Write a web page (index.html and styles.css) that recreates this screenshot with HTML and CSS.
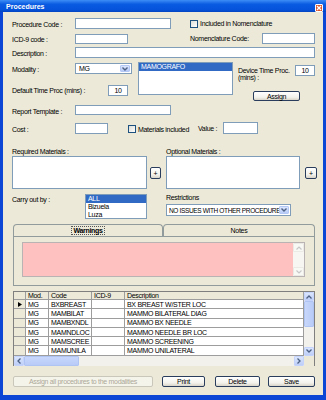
FILE: index.html
```html
<!DOCTYPE html>
<html lang="en">
<head>
    <meta charset="UTF-8">
    <title>Procedures</title>
    <link rel="stylesheet" href="styles.css">
</head>
<body>

<div class="window">
    <div class="titlebar">
        <span class="title">Procedures</span>
        <span class="close">
            <svg width="6" height="6" viewBox="0 0 6 6"><path d="M1 1L5 5M5 1L1 5" stroke="#fff" stroke-width="1.3"/></svg>
        </span>
    </div>

    <div class="content">
        <!-- code / nomenclature -->
        <div class="row row-code">
            <span class="lbl">Procedure Code :</span>
            <span class="field f-code"></span>
            <span class="check-wrap"><span class="check"></span>Included in Nomenclature</span>
        </div>

        <div class="row row-icd">
            <span class="lbl">ICD-9 code :</span>
            <span class="field f-icd"></span>
            <span class="lbl-nomen">Nomenclature Code:</span>
            <span class="field f-nomen"></span>
        </div>

        <div class="row row-desc">
            <span class="lbl">Description :</span>
            <span class="field f-desc"></span>
        </div>

        <!-- modality block -->
        <div class="modality-block">
            <div class="mod-left">
                <div class="row row-mod">
                    <span class="lbl">Modality :</span>
                    <span class="combo combo-mod">
                        <span class="combo-text">MG</span>
                        <span class="combo-btn"><svg width="6" height="4" viewBox="0 0 6 4"><path d="M0.5 0.5L3 3L5.5 0.5" fill="none" stroke="#4d6185" stroke-width="1.4"/></svg></span>
                    </span>
                </div>
                <div class="row row-default">
                    <span class="lbl lbl-default">Default Time Proc (mins) :</span>
                    <span class="field num">10</span>
                </div>
            </div>
            <div class="listbox list-mod">
                <div class="item selected">MAMOGRAFO</div>
            </div>
            <div class="mod-right">
                <div class="row-device">
                    <span class="lbl-device">Device Time Proc.<br>(mins) :</span>
                    <span class="field num">10</span>
                </div>
                <button class="btn btn-assign">Assign</button>
            </div>
        </div>

        <div class="row row-report">
            <span class="lbl">Report Template :</span>
            <span class="field f-report"></span>
        </div>

        <div class="row row-cost">
            <span class="lbl">Cost :</span>
            <span class="field f-cost"></span>
            <span class="check-wrap check-mat"><span class="check"></span>Materials included</span>
            <span class="lbl-value">Value :</span>
            <span class="field f-value"></span>
        </div>

        <!-- materials -->
        <div class="two-col materials">
            <div>
                <div class="mat-label">Required Materials :</div>
                <div class="mat-body">
                    <div class="listbox list-req"></div>
                    <button class="btn btn-plus">+</button>
                </div>
            </div>
            <div>
                <div class="mat-label">Optional Materials :</div>
                <div class="mat-body">
                    <div class="listbox list-opt"></div>
                    <button class="btn btn-plus btn-plus-opt">+</button>
                </div>
            </div>
        </div>

        <div class="two-col carry">
            <div class="carry-left">
                <span class="lbl lbl-carry">Carry out by :</span>
                <div class="listbox list-carry">
                    <div class="item selected">ALL</div>
                    <div class="item">Bizuela</div>
                    <div class="item">Luza</div>
                </div>
            </div>
            <div>
                <div class="lbl-restr">Restrictions</div>
                <span class="combo combo-restr">
                    <span class="combo-text">NO ISSUES WITH OTHER PROCEDURE</span>
                    <span class="combo-btn"><svg width="6" height="4" viewBox="0 0 6 4"><path d="M0.5 0.5L3 3L5.5 0.5" fill="none" stroke="#4d6185" stroke-width="1.4"/></svg></span>
                </span>
            </div>
        </div>

        <!-- tabs -->
        <div class="tabs">
            <div class="tab-strip">
                <div class="tab tab-warn"><span class="focus">Warnings</span></div>
                <div class="tab tab-notes">Notes</div>
            </div>
            <div class="tab-panel">
                <div class="memo">
                    <div class="memo-scroll">
                        <span class="arrow-box pale"><svg width="6" height="4" viewBox="0 0 6 4"><path d="M0.5 3.5L3 1L5.5 3.5" fill="none" stroke="#c8c8c8" stroke-width="1.2"/></svg></span>
                        <span class="arrow-box pale"><svg width="6" height="4" viewBox="0 0 6 4"><path d="M0.5 0.5L3 3L5.5 0.5" fill="none" stroke="#c8c8c8" stroke-width="1.2"/></svg></span>
                    </div>
                </div>
            </div>
        </div>

        <!-- procedures grid -->
        <div class="grid">
            <div class="grid-main">
                <div class="grid-table">
                    <div class="hcell"></div><div class="hcell">Mod.</div><div class="hcell">Code</div><div class="hcell">ICD-9</div><div class="hcell">Description</div>

                    <div class="rhead"><svg width="4" height="5" viewBox="0 0 4 5"><path d="M0 0L4 2.5L0 5Z" fill="#000"/></svg></div><div class="cell">MG</div><div class="cell">BXBREAST</div><div class="cell"></div><div class="cell">BX BREAST W/STER LOC</div>
                    <div class="rhead"></div><div class="cell">MG</div><div class="cell">MAMBILAT</div><div class="cell"></div><div class="cell">MAMMO BILATERAL DIAG</div>
                    <div class="rhead"></div><div class="cell">MG</div><div class="cell">MAMBXNDL</div><div class="cell"></div><div class="cell">MAMMO BX NEEDLE</div>
                    <div class="rhead"></div><div class="cell">MG</div><div class="cell">MAMNDLOC</div><div class="cell"></div><div class="cell">MAMMO NEEDLE BR LOC</div>
                    <div class="rhead"></div><div class="cell">MG</div><div class="cell">MAMSCREE</div><div class="cell"></div><div class="cell">MAMMO SCREENING</div>
                    <div class="rhead"></div><div class="cell">MG</div><div class="cell">MAMUNILA</div><div class="cell"></div><div class="cell">MAMMO UNILATERAL</div>
                </div>
                <div class="vscroll">
                    <span class="arrow-box"><svg width="6" height="4" viewBox="0 0 6 4"><path d="M0.5 3.5L3 1L5.5 3.5" fill="none" stroke="#4d6185" stroke-width="1.3"/></svg></span>
                    <span class="vthumb"></span>
                    <span class="track"></span>
                    <span class="arrow-box"><svg width="6" height="4" viewBox="0 0 6 4"><path d="M0.5 0.5L3 3L5.5 0.5" fill="none" stroke="#4d6185" stroke-width="1.3"/></svg></span>
                </div>
            </div>
            <div class="grid-bottom">
                <div class="hscroll">
                    <span class="arrow-box"><svg width="4" height="6" viewBox="0 0 4 6"><path d="M3.5 0.5L1 3L3.5 5.5" fill="none" stroke="#4d6185" stroke-width="1.3"/></svg></span>
                    <span class="hthumb"></span>
                    <span class="track"></span>
                    <span class="arrow-box"><svg width="4" height="6" viewBox="0 0 4 6"><path d="M0.5 0.5L3 3L0.5 5.5" fill="none" stroke="#4d6185" stroke-width="1.3"/></svg></span>
                </div>
                <div class="corner"></div>
            </div>
        </div>

        <!-- bottom buttons -->
        <div class="bottom-buttons">
            <button class="btn btn-all" disabled>Assign all procedures to the modalities</button>
            <button class="btn btn-print">Print</button>
            <button class="btn btn-delete">Delete</button>
            <button class="btn btn-save">Save</button>
        </div>
    </div>
</div>

</body>
</html>
```

FILE: styles.css
```css
* {
    box-sizing: border-box;
}

body {
    margin: 0;
    font-family: "Liberation Sans", Arial, sans-serif;
    font-size: 7px;
    letter-spacing: -0.3px;
    color: #000;
}

.window {
    width: 326px;
    height: 400px;
    display: flex;
    flex-direction: column;
    padding: 0 3px 5px 3px;
    background: #0b47d4;
}

.titlebar {
    height: 12px;
    margin: 0 -3px;
    padding: 0 3px 0 6px;
    display: flex;
    align-items: center;
    justify-content: space-between;
    background: linear-gradient(to bottom, #3d8ef6, #0a5ae2 35%, #0553da 80%, #0344c2);
}

.title {
    color: #fff;
    font-weight: bold;
    font-size: 7px;
    letter-spacing: 0;
}

.close {
    width: 8px;
    height: 8px;
    margin-top: 3px;
    border: 1px solid #fff;
    border-radius: 1px;
    background: #d9562f;
    display: flex;
    align-items: center;
    justify-content: center;
}

.content {
    flex: 1;
    background: #ece9d8;
    padding: 6px 8px 0 9px;
}

.row {
    display: flex;
    align-items: center;
}

.lbl {
    width: 63px;
    flex: none;
    padding-top: 2px;
    white-space: nowrap;
}

.field {
    display: flex;
    align-items: center;
    justify-content: center;
    flex: none;
    height: 11px;
    background: #fff;
    border: 1px solid #7f9db9;
}

.check-wrap {
    display: flex;
    align-items: center;
    white-space: nowrap;
}

.check {
    width: 8px;
    height: 8px;
    margin-right: 2px;
    border: 1px solid #1c5180;
    background: linear-gradient(135deg, #dcdcd7, #fff);
}

/* top rows */
.row-code {
    height: 11px;
}

.f-code {
    width: 96px;
}

.row-code .check-wrap {
    margin-left: 19px;
}

.row-icd {
    height: 11px;
    margin-top: 4px;
}

.f-icd {
    width: 53px;
    height: 10px;
}

.lbl-nomen {
    margin-left: 62px;
    white-space: nowrap;
}

.f-nomen {
    width: 53px;
    margin-left: auto;
}

.row-desc {
    height: 11px;
    margin-top: 3px;
}

.f-desc {
    flex: 1;
}

/* modality */
.modality-block {
    display: flex;
    height: 38px;
    margin-top: 4px;
}

.mod-left {
    width: 126px;
    flex: none;
}

.row-mod {
    height: 11px;
    margin-top: 1px;
}

.row-default {
    height: 11px;
    margin-top: 11px;
}

.lbl-default {
    width: 96px;
    padding-top: 0;
}

.num {
    width: 20px;
}

.combo {
    display: flex;
    align-items: center;
    background: #fff;
    border: 1px solid #7f9db9;
    padding: 1px;
}

.combo-text {
    flex: 1;
    padding-left: 2px;
    white-space: nowrap;
    overflow: hidden;
}

.combo-btn {
    width: 10px;
    height: 100%;
    flex: none;
    display: flex;
    align-items: center;
    justify-content: center;
    border-radius: 1px;
    background: linear-gradient(to bottom, #dbe6fd, #b8cbf7);
    border: 1px solid #b4c8f6;
}

.combo-mod {
    width: 57px;
    height: 11px;
}

.listbox {
    background: #fff;
    border: 1px solid #7f9db9;
    flex: none;
}

.item {
    height: 8px;
    line-height: 8px;
    padding-left: 2px;
    white-space: nowrap;
}

.item.selected {
    background: #316ac5;
    color: #fff;
}

.list-mod {
    width: 95px;
    height: 33px;
}

.mod-right {
    width: 77px;
    margin-left: 5px;
}

.row-device {
    display: flex;
    align-items: flex-start;
    margin-top: 3px;
}

.lbl-device {
    width: 57px;
    padding-top: 2px;
    line-height: 7px;
}

.btn {
    font: inherit;
    letter-spacing: inherit;
    color: #000;
    padding: 0;
    display: flex;
    align-items: center;
    justify-content: center;
    border: 1px solid #2a3d5c;
    border-radius: 2px;
    background: linear-gradient(to bottom, #fff, #f3f2ec 65%, #d8d4c8);
}

.btn-assign {
    width: 47px;
    height: 10px;
    margin: 10px 0 0 15px;
}

/* report / cost */
.row-report {
    height: 10px;
    margin-top: 5px;
}

.f-report {
    width: 96px;
    height: 10px;
}

.row-cost {
    height: 12px;
    margin-top: 7px;
}

.f-cost {
    width: 33px;
}

.check-mat {
    width: 70px;
    margin-left: 20px;
    padding-top: 2px;
}

.lbl-value {
    width: 25px;
    flex: none;
}

.f-value {
    width: 35px;
    height: 12px;
}

/* materials */
.two-col {
    display: grid;
    grid-template-columns: 154px 1fr;
}

.materials {
    margin-top: 14px;
}

.mat-label {
    height: 8px;
    line-height: 8px;
}

.mat-body {
    display: flex;
    align-items: flex-start;
}

.list-req {
    width: 135px;
    height: 33px;
}

.list-opt {
    width: 134px;
    height: 33px;
}

.btn-plus {
    width: 11px;
    height: 12px;
    margin: 11px 0 0 3px;
}

.btn-plus-opt {
    width: 12px;
    margin-left: 5px;
}

.carry {
    height: 25px;
    margin-top: 5px;
}

.carry-left {
    display: flex;
    align-items: flex-start;
}

.lbl-carry {
    width: 73px;
    padding-top: 2px;
}

.list-carry {
    width: 62px;
    height: 25px;
}

.lbl-restr {
    height: 10px;
    line-height: 8px;
}

.combo-restr {
    width: 125px;
    height: 12px;
}

.combo-restr .combo-text {
    font-size: 6.5px;
    letter-spacing: -0.35px;
    padding-left: 1px;
}

/* tabs */
.tabs {
    width: 302px;
    margin: 5px 0 0 1px;
}

.tab-strip {
    display: flex;
    height: 12px;
}

.tab {
    display: flex;
    align-items: center;
    justify-content: center;
    border: 1px solid #919b9c;
    border-bottom: none;
    border-radius: 4px 4px 0 0;
}

.tab-warn {
    width: 150px;
}

.tab-notes {
    width: 152px;
}

.focus {
    font-weight: bold;
    padding: 0 1px;
    border: 1px dotted #555;
}

.tab-panel {
    height: 50px;
    border: 1px solid #919b9c;
    padding: 5px 9px 8px 8px;
}

.memo {
    height: 100%;
    display: flex;
    justify-content: flex-end;
    background: #ffc0c0;
    border: 1px solid #b9b3b3;
}

.memo-scroll {
    width: 11px;
    display: flex;
    flex-direction: column;
    justify-content: space-between;
    background: #f7f6f3;
}

.arrow-box {
    width: 10px;
    height: 9px;
    flex: none;
    display: flex;
    align-items: center;
    justify-content: center;
    border-radius: 1px;
    background: linear-gradient(to bottom, #dbe6fd, #bccdf7);
    border: 1px solid #c3d3fb;
}

.arrow-box.pale {
    width: 11px;
    background: #f8f8f5;
    border-color: #ebeae4;
}

/* grid */
.grid {
    width: 302px;
    height: 75px;
    margin: 5px 0 0 1px;
    display: flex;
    flex-direction: column;
    border: 1px solid #7f7f7f;
    background: #ababab;
}

.grid-main {
    display: flex;
    height: 64px;
}

.grid-table {
    flex: 1;
    display: grid;
    grid-template-columns: 12px 23px 43px 33px 1fr;
    grid-template-rows: 8px repeat(6, 9.3px);
    overflow: hidden;
    background: #ababab;
}

.hcell,
.rhead,
.cell {
    border-right: 1px solid #9d9d9d;
    border-bottom: 1px solid #9d9d9d;
    padding-left: 2px;
    white-space: nowrap;
    overflow: hidden;
    display: flex;
    align-items: center;
}

.hcell,
.rhead {
    background: #ece9d8;
}

.rhead {
    justify-content: center;
    padding-left: 0;
}

.cell {
    background: #fff;
}

.vscroll {
    width: 10px;
    display: flex;
    flex-direction: column;
    background: #f3f1ec;
}

.vthumb {
    height: 26px;
    background: linear-gradient(to right, #c8d7fb, #b8cbf7);
    border: 1px solid #b0c4f3;
    border-radius: 1px;
}

.track {
    flex: 1;
}

.grid-bottom {
    display: flex;
    height: 10px;
}

.hscroll {
    flex: 1;
    display: flex;
    background: #f3f1ec;
}

.hscroll .arrow-box {
    height: 10px;
}

.hthumb {
    width: 55px;
    background: linear-gradient(to bottom, #c8d7fb, #b8cbf7);
    border: 1px solid #b0c4f3;
    border-radius: 1px;
}

.corner {
    width: 10px;
    background: #ece9d8;
}

/* bottom buttons */
.bottom-buttons {
    display: flex;
    height: 11px;
    margin: 10px 0 0 1px;
}

.btn-all {
    width: 140px;
    color: #aca899;
    border-color: #c9c7ba;
    background: #f5f4ea;
}

.btn-print {
    width: 43px;
    margin-left: 9px;
}

.btn-delete {
    width: 45px;
    margin-left: 10px;
}

.btn-save {
    width: 47px;
    margin-left: 8px;
}
```
